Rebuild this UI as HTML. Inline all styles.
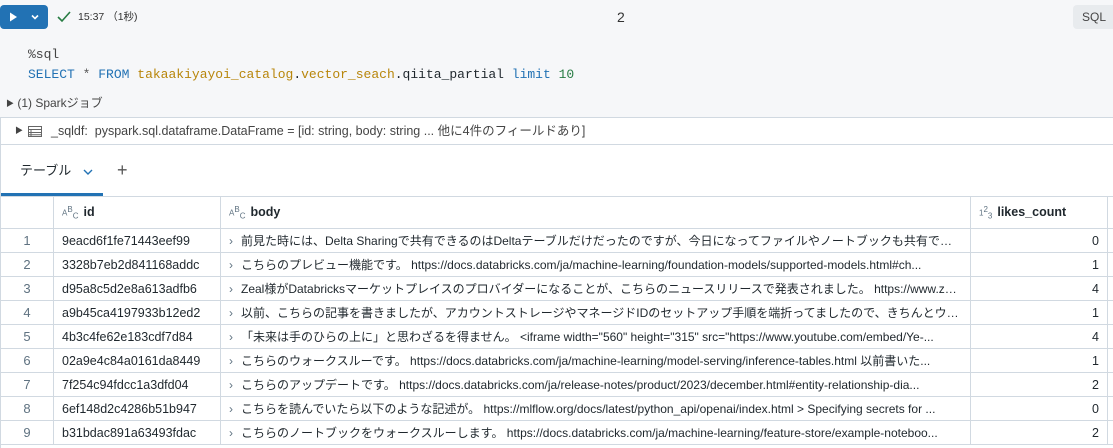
<!DOCTYPE html>
<html><head><meta charset="utf-8"><style>
*{margin:0;padding:0;box-sizing:border-box}
body{width:1113px;height:448px;overflow:hidden;background:#fff;font-family:"Liberation Sans","Noto Sans CJK JP",sans-serif;color:#1f272d;position:relative}
.top{position:absolute;left:0;top:0;width:1113px;height:118px;background:#f6f7f9}
.run{position:absolute;left:0;top:5px;width:48px;height:24px;background:#2272b4;border-radius:4px}
.mono{font-family:"Liberation Mono","Noto Sans CJK JP",monospace;font-size:13px;line-height:16px}
.abs{position:absolute;white-space:nowrap}
.df{position:absolute;left:0;top:117px;width:1113px;height:28px;border-top:1px solid #d1d9e1;border-bottom:1px solid #d1d9e1;border-left:1px solid #d1d9e1;background:#fff}
table{position:absolute;left:0;top:196px;width:1117px;border-collapse:collapse;table-layout:fixed;font-size:12.5px}
td,th{border:1px solid #d1d9e1;height:24px;padding:0 8px;white-space:nowrap;overflow:hidden;text-overflow:ellipsis;line-height:16px}
td.b{font-size:12px}
th{height:32px;text-align:left;font-weight:bold;font-size:12.5px}
td.n{text-align:center;color:#5f7281;font-size:13px}
td.r{text-align:right}
.ic{font-size:8px;color:#5f7281;font-weight:normal;margin-right:5px;display:inline-block;position:relative;top:-1px;line-height:8px}
.ic sup,.ic sub{font-size:8px}
.chev{color:#5f7281;margin-right:8px;font-size:12px}
</style></head><body>
<div class="top"></div>
<div class="run"><svg width="48" height="24"><path d="M10 7.5 L17 12 L10 16.5Z" fill="#fff"/><path d="M32 10.5 L35 13.5 L38 10.5" stroke="#fff" stroke-width="1.6" fill="none"/></svg></div>
<svg class="abs" style="left:56px;top:10px" width="16" height="14"><path d="M2 7 L6 11 L14 2" stroke="#277c43" stroke-width="1.6" fill="none"/></svg>
<div class="abs" style="left:78px;top:11px;font-size:10.5px;line-height:12px;color:#333">15:37 （1秒)</div>
<div class="abs" style="left:617px;top:9px;font-size:14px;line-height:16px;color:#333">2</div>
<div class="abs" style="left:1073px;top:5px;width:40px;height:24px;background:#e8ebee;border-radius:4px 0 0 4px;font-size:12px;line-height:14px;color:#444;padding:5px 0 0 9px">SQL</div>
<div class="abs mono" style="left:28px;top:47px;color:#444">%sql</div>
<div class="abs mono" style="left:28px;top:67px"><span style="color:#2272b4">SELECT</span> <span style="color:#555">*</span> <span style="color:#2272b4">FROM</span> <span style="color:#b8860b">takaakiyayoi_catalog</span>.<span style="color:#b8860b">vector_seach</span>.qiita_partial <span style="color:#2272b4">limit</span> <span style="color:#277c43">10</span></div>
<div class="abs" style="left:6px;top:95px;font-size:12px;line-height:16px;color:#444"><span style="font-size:8px;position:relative;top:-1px">▶</span> (1) Sparkジョブ</div>
<div class="df">
<div class="abs" style="left:14px;top:8px;font-size:8px;line-height:10px;color:#444">▶</div>
<svg class="abs" style="left:27px;top:8px" width="14" height="11"><rect x="0.5" y="0.5" width="13" height="10" fill="#fff" stroke="#666"/><path d="M0 3.5H14M3 3.5V11M0 6.5H14M0 8.8H14" stroke="#666"/></svg>
<div class="abs" style="left:50px;top:5px;font-size:12.5px;line-height:16px;color:#444">_sqldf:&nbsp; pyspark.sql.dataframe.DataFrame = [id: string, body: string ... 他に4件のフィールドあり]</div>
</div>
<div class="abs" style="left:20px;top:163px;font-size:13px;line-height:16px">テーブル</div>
<svg class="abs" style="left:83px;top:168px" width="10" height="8"><path d="M1 2 L5 6 L9 2" stroke="#2272b4" stroke-width="1.4" fill="none"/></svg>
<div class="abs" style="left:117px;top:160px;font-size:18px;line-height:20px;color:#555;font-weight:300">+</div>
<div class="abs" style="left:0;top:193px;width:103px;height:3px;background:#2272b4"></div>
<div class="abs" style="left:0;top:118px;width:1px;height:330px;background:#d1d9e1"></div>
<table>
<colgroup><col style="width:53px"><col style="width:167px"><col style="width:750px"><col style="width:137px"><col style="width:10px"></colgroup>
<tr><th></th><th><span class="ic">A<sup>B</sup><sub>C</sub></span>id</th><th><span class="ic">A<sup>B</sup><sub>C</sub></span>body</th><th><span class="ic">1<sup>2</sup><sub>3</sub></span>likes_count</th><th></th></tr>
<tr><td class="n">1</td><td>9eacd6f1fe71443eef99</td><td class="b"><span class="chev">›</span>前見た時には、Delta Sharingで共有できるのはDeltaテーブルだけだったのですが、今日になってファイルやノートブックも共有できること...</td><td class="r">0</td><td></td></tr>
<tr><td class="n">2</td><td>3328b7eb2d841168addc</td><td class="b"><span class="chev">›</span>こちらのプレビュー機能です。 https://docs.databricks.com/ja/machine-learning/foundation-models/supported-models.html#ch...</td><td class="r">1</td><td></td></tr>
<tr><td class="n">3</td><td>d95a8c5d2e8a613adfb6</td><td class="b"><span class="chev">›</span>Zeal様がDatabricksマーケットプレイスのプロバイダーになることが、こちらのニュースリリースで発表されました。 https://www.zdh.co...</td><td class="r">4</td><td></td></tr>
<tr><td class="n">4</td><td>a9b45ca4197933b12ed2</td><td class="b"><span class="chev">›</span>以前、こちらの記事を書きましたが、アカウントストレージやマネージドIDのセットアップ手順を端折ってましたので、きちんとウォークス...</td><td class="r">1</td><td></td></tr>
<tr><td class="n">5</td><td>4b3c4fe62e183cdf7d84</td><td class="b"><span class="chev">›</span>「未来は手のひらの上に」と思わざるを得ません。 &lt;iframe width="560" height="315" src="https://www.youtube.com/embed/Ye-...</td><td class="r">4</td><td></td></tr>
<tr><td class="n">6</td><td>02a9e4c84a0161da8449</td><td class="b"><span class="chev">›</span>こちらのウォークスルーです。 https://docs.databricks.com/ja/machine-learning/model-serving/inference-tables.html 以前書いた...</td><td class="r">1</td><td></td></tr>
<tr><td class="n">7</td><td>7f254c94fdcc1a3dfd04</td><td class="b"><span class="chev">›</span>こちらのアップデートです。 https://docs.databricks.com/ja/release-notes/product/2023/december.html#entity-relationship-dia...</td><td class="r">2</td><td></td></tr>
<tr><td class="n">8</td><td>6ef148d2c4286b51b947</td><td class="b"><span class="chev">›</span>こちらを読んでいたら以下のような記述が。 https://mlflow.org/docs/latest/python_api/openai/index.html &gt; Specifying secrets for ...</td><td class="r">0</td><td></td></tr>
<tr><td class="n">9</td><td>b31bdac891a63493fdac</td><td class="b"><span class="chev">›</span>こちらのノートブックをウォークスルーします。 https://docs.databricks.com/ja/machine-learning/feature-store/example-noteboo...</td><td class="r">2</td><td></td></tr>
</table>
</body></html>
